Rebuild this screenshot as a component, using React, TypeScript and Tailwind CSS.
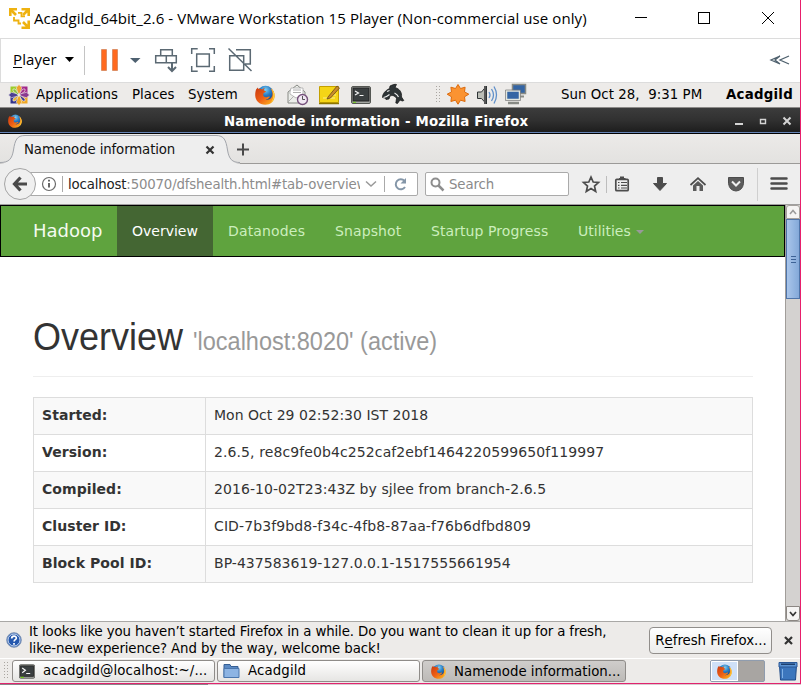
import type { ReactNode } from "react";

const GTK = "font-['DejaVu_Sans',sans-serif] text-[13.33px] leading-[16px] whitespace-pre";
const WIN = "font-['Open_Sans','Noto_Sans',sans-serif] whitespace-pre text-black";

function Firefox({ size, className = "" }: { size: number; className?: string }) {
  return (
    <svg width={size} height={size} viewBox="0 0 20 20" className={"shrink-0 " + className}>
      <defs>
        <radialGradient id="globe" cx=".5" cy=".25" r=".7">
          <stop offset="0" stopColor="#7fd0f5" />
          <stop offset=".45" stopColor="#2a7fc6" />
          <stop offset="1" stopColor="#123a80" />
        </radialGradient>
        <linearGradient id="fox" x1="0" y1="0" x2="1" y2="1">
          <stop offset="0" stopColor="#c93a10" />
          <stop offset=".5" stopColor="#ee5f16" />
          <stop offset=".85" stopColor="#f9a51c" />
          <stop offset="1" stopColor="#ffe14a" />
        </linearGradient>
      </defs>
      <circle cx="10.5" cy="9" r="8.3" fill="url(#globe)" />
      <path
        d="M1.2 4.2C1.7 3.6 2.2 3 2.9 2.4c.1.7.4 1.200.8 1.500 1.200-.3 2.500 0 3.500.500C8.500 3.300 9.600 3 9.900 3c-.7.7-1.200 1.700-1.200 2.300 1.200.7 2 .7 2.300 1-.2.9-1.800 1.500-2.600 2-.1.9.2 1.400-.3 2 .6 1.700 2.500 2.300 4 1.700 1-.4 2.100-.9 2.800-.1-1.200 1.400-2.900 2.800-4.700 2.900 4.500.6 7.300-2.400 7.200-5.900 0-2.400-.9-4.300-2-5.700 2.900 1.700 4.500 4.600 4.300 8C19.400 16.200 15.300 19.700 10.300 19.700 4.500 19.700.3 15.600.2 10.200.2 7.600.5 6 1.200 4.200z"
        fill="url(#fox)"
      />
      <path d="M15.800 3.200c2.700 1.900 4 4.700 3.700 8-.4 2.600-1.600 4.700-3.300 6 1.500-2.600 2.300-5 1.900-8.300-.3-2.300-1.200-4.100-2.300-5.700z" fill="#ffd23c" />
    </svg>
  );
}

function Terminal({ w, h }: { w: number; h: number }) {
  return (
    <svg width={w} height={h} viewBox="0 0 20 18" className="shrink-0">
      <rect x=".5" y=".5" width="19" height="17" rx="1.500" fill="#a4a6a2" stroke="#555753" />
      <rect x="2" y="2" width="16" height="13" fill="#3a3f40" stroke="#222" />
      <path d="M4 4.500L8 7.500 4 10.500M9 11.500h5" stroke="#f5f5f5" strokeWidth="1.500" fill="none" />
      <path d="M2 16.300h4" stroke="#73d216" strokeWidth="1.500" />
    </svg>
  );
}

function WindowsTitle() {
  return (
    <div className="flex h-[38px] items-center pb-[2px] pl-[9px]">
      <svg width="21" height="21" viewBox="0 0 21 21" className="shrink-0" fill="none" stroke="#eeb211" strokeWidth="2.600">
        <path d="M1.300 8V1.300H8" />
        <path d="M1.500 1.500l5.500 5.500" />
        <path d="M12.500 1.300h7.200V8M19.500 1.500L14 7" />
        <path d="M19.700 12.500v7.200H12.500M19.500 19.500L14 14" />
        <path d="M9 4.800h3.500v3.500H16M5 9v3.500h4.500v3H12" strokeWidth="1.800" />
      </svg>
      <span className={WIN + " ml-[4px] w-[560px] text-[15px] leading-[20px] tracking-[0.085px]"}>
        Acadgild_64bit_2.6 - VMware Workstation 15 Player (Non-commercial use only)
      </span>
      <svg width="146" height="14" viewBox="0 0 146 14" className="ml-[40px] shrink-0" fill="none" stroke="#000">
        <path d="M1 6.500h12" />
        <rect x="64.500" y="1.500" width="11" height="11" />
        <path d="M128 1l12 12M140 1l-12 12" />
      </svg>
    </div>
  );
}

function PlayerBar() {
  return (
    <div className="flex h-[45px] items-center border-y border-l border-[#dcdcdc] pb-[2px] pl-[12px]">
      <span className={WIN + " w-[48px] text-[15px] leading-[20px] tracking-[0.1px] -translate-y-px"}>
        <span className="underline decoration-1 underline-offset-2">P</span>layer
      </span>
      <svg width="230" height="34" viewBox="61 43 230 34" className="shrink-0" fill="none">
        <path d="M65 57h9l-4.500 5z" fill="#000" />
        <path d="M84.500 46v29" stroke="#c4c4c4" />
        <path d="M101.500 49.500h5v21h-5zM112.500 49.500h5v21h-5z" fill="#ff6a1f" stroke="#c8764c" strokeWidth=".6" />
        <path d="M130 58h10.500l-5.200 5z" fill="#4e6070" />
        <g stroke="#5b6973" strokeWidth="1.500">
          <path d="M160.700 49.700h11.600v6h-11.600zM155.700 55.700h10.600v7h-10.600zM166.300 55.700h10v7h-10z" />
          <path d="M172 63v7M168 67l4 4 4-4" strokeWidth="2" />
          <path d="M191.700 54v-5.300h6M209 48.700h5.300V54M214.300 66v5.300H209M197.700 71.300h-6V66" />
          <path d="M196.700 54h12.600v12.600h-12.600z" />
          <path d="M236 49.700h14.300V64H245M229.700 55.700h14v14.600h-14zM228.500 48.500l23 22.500" />
        </g>
      </svg>
      <svg width="21" height="12" viewBox="0 0 21 12" className="ml-auto mr-[10px] shrink-0" fill="none" stroke="#4f616e" strokeWidth="1.300">
        <path d="M11 2L2 6l9 4M20 2L11 6l9 4M11 2L6 6l5 4" />
      </svg>
    </div>
  );
}

function Dots({ rows }: { rows: number }) {
  return (
    <svg width="6" height={rows * 3} viewBox={`0 0 6 ${rows * 3}`} className="shrink-0">
      {Array.from({ length: rows }, (_, i) => (
        <path key={i} d={`M0 ${i * 3 + 0.5}h1M3 ${i * 3 + 0.5}h1`} stroke="#aaa6a1" />
      ))}
    </svg>
  );
}

function CentosLogo() {
  const blades = ["#efa030", "#a02a86", "#8a3a90", "#3a3a90", "#efa724", "#e5b030", "#4c3f93", "#8cbf3a"];
  return (
    <svg width="22" height="22" viewBox="-11 -11 22 22" className="shrink-0">
      <path d="M-8.500-8.500h7.500v7.500h-7.500z" fill="#9ccd2a" />
      <path d="M1-8.500h7.500V-1H1z" fill="#a3288a" />
      <path d="M1 1h7.500v7.500H1z" fill="#efa724" />
      <path d="M-8.500 1H-1v7.500h-7.500z" fill="#34338a" />
      {blades.map((c, i) => (
        <path
          key={i}
          d={i % 2 ? "M0-8.500L1.500-7 .6-1h-1.200L-1.500-7z" : "M0-10.500l2.700 3-1.700 6.500h-2l-1.700-6.500z"}
          fill={c}
          stroke="#f3f1ef"
          strokeWidth=".6"
          transform={`rotate(${i * 45})`}
        />
      ))}
    </svg>
  );
}

function GnomePanel() {
  return (
    <div className={GTK + " flex h-[24px] items-center bg-[#edebe9] pl-[8px] text-black"}>
      <CentosLogo />
      <span className="ml-[6px] w-[96px] tracking-[0.04px]">Applications</span>
      <span className="w-[56px]">Places</span>
      <span className="w-[67px]">System</span>
      <Firefox size={20} />
      <svg width="132" height="24" viewBox="275 83 132 24" className="shrink-0" fill="none">
        <path d="M288 92l9-7 8 7v11h-17z" fill="#eceeea" stroke="#888a85" />
        <path d="M290 92l1-4h12v7l-7 3-6-4z" fill="#fff" stroke="#aaa" strokeWidth=".8" />
        <path d="M288 102l6-6M293 90h8M293 92.500h8" stroke="#b0b0b0" />
        <circle cx="302.500" cy="99.500" r="5" fill="#f1e8f3" stroke="#75507b" strokeWidth="1.400" />
        <path d="M302.500 96v3.500h2.500" stroke="#555" />
        <path d="M319.500 86.500h19v16h-19z" fill="#f5d516" stroke="#c4a000" />
        <path d="M319 103.500h20" stroke="#8d7500" strokeWidth="1.500" />
        <path d="M323 98h12M330 95h6" stroke="#fcf08a" />
        <path d="M328 97l9-11 2.500 2-9 10-3.500 1z" fill="#c98c2a" stroke="#6b4a1a" strokeWidth=".8" />
        <rect x="351.500" y="86.500" width="19" height="17" rx="1.500" fill="#a4a6a2" stroke="#555753" />
        <rect x="353" y="88" width="16" height="13" fill="#3a3f40" stroke="#222" />
        <path d="M355 91l3.500 2-3.500 2M359.500 95.500h4" stroke="#f5f5f5" strokeWidth="1.200" />
        <path d="M353 102.300h3" stroke="#73d216" />
        <path
          d="M382.500 97.500c0-4 3-7 7-9l.5-2.500c3-1.500 5-2 6.500-1.500l-1.500 3c5 1.500 7 5 6.500 9.500l2.300 3.500-1.500.500-2.300-1-2.500 3.500-1.700-.5.700-4.500c-2-3-4-3.500-6.500-2.500l-1 3-3 .500-1-1.500z"
          fill="#2e3436"
          stroke="#111"
          strokeWidth=".7"
        />
        <path d="M383.500 97.500c2.500-.3 4-1.300 6-3M387 91.500l2.500-1M394.500 93c2 1 3.300 2 4 4" stroke="#eee" strokeWidth="1.100" />
      </svg>
      <span className="ml-[29px] flex">
        <Dots rows={6} />
      </span>
      <svg width="88" height="24" viewBox="442 83 88 24" className="shrink-0" fill="none">
        <path d="M458 84.500l2.500 4 4.600-1.300-.6 4.700 4.300 2.300-4.300 2.600.6 4.700-4.600-1.300-2.500 4-2.500-4-4.600 1.300.6-4.700-4.300-2.600 4.300-2.300-.6-4.700 4.600 1.300z" fill="#fb9331" stroke="#dc6a0c" strokeWidth="1" strokeLinejoin="round" />
        <path d="M477.500 92h4l5-6v18l-5-5.500h-4z" fill="#babdb6" stroke="#2e3436" />
        <path d="M485 86v18" stroke="#555" strokeWidth="2" />
        <path d="M489 92q2 3 0 6M491.500 89q4 6 0 12M494 86.500q5 8.500 0 17" stroke="#5f8fc9" strokeWidth="1.300" />
        <path d="M512.500 84.500h13v9h-13z" fill="#3465a4" stroke="#888a85" strokeWidth="1.500" />
        <path d="M516 96.500h8" stroke="#888a85" strokeWidth="2" />
        <path d="M506.500 91h13v8.500h-13z" fill="#3465a4" stroke="#e3e7df" strokeWidth="1.500" />
        <path d="M505.500 90h15v10.500h-15z" stroke="#777" strokeWidth=".7" />
        <path d="M508 103h11" stroke="#888a85" strokeWidth="2.500" />
      </svg>
      <span className="ml-[31px] w-[165px] tracking-[0.05px]">Sun Oct 28,  9:31 PM</span>
      <span className="font-bold tracking-[0.25px]">Acadgild</span>
    </div>
  );
}

function FirefoxTitle() {
  return (
    <div className="flex h-[27px] items-center border-b border-t border-b-black border-t-[#8c8a88] bg-linear-to-b from-[#3c3c3c] via-[#303030] to-[#1c1c1c] pl-[8px] shadow-[inset_0_-1px_0_#6583b5]">
      <Firefox size={14} />
      <span className={GTK + " ml-[202px] w-[510px] translate-y-px font-bold tracking-[0.16px] text-white"}>
        Namenode information - Mozilla Firefox
      </span>
      <svg width="58" height="12" viewBox="734 115 58 12" className="shrink-0" fill="none" stroke="#d4d4d4" strokeWidth="2">
        <path d="M735 124h8" />
        <path d="M760.500 119.500h5v4h-5z" strokeWidth="1.400" />
        <path d="M783.500 117.500l7 7M790.500 117.500l-7 7" />
      </svg>
    </div>
  );
}

function TabStrip() {
  return (
    <div className="relative flex h-[30px] items-center border-b border-[#9b9a98] bg-linear-to-b from-[#eceae8] to-[#e3e2e0]">
      <svg width="250" height="30" viewBox="0 0 250 30" className="absolute left-0 top-0" fill="none">
        <path d="M0 29.500C9 29.500 12 25 13.500 16 15 6 17 1.500 25 1.500h191c8 0 10 4.500 11.500 14.500C229 25 232 29.500 240 29.500V30H0z" fill="#eeeeee" />
        <path d="M0 28.500C9 28.500 12 25 13.500 16 15 6 17 1.500 25 1.500h191c8 0 10 4.500 11.500 14.500C229 25 232 28.500 240 28.500" stroke="#a2a5ab" />
        <path d="M206.500 12.500l7 7M213.500 12.500l-7 7" stroke="#333" strokeWidth="2.200" />
        <path d="M237 15.500h12M243 9.500v12" stroke="#4a4a4a" strokeWidth="2" />
      </svg>
      <span className={GTK + " relative ml-[24px] translate-y-px tracking-[-0.13px] text-[#111]"}>Namenode information</span>
    </div>
  );
}

function NavToolbar() {
  return (
    <div className={GTK + " flex h-[41px] items-center border-b border-[#a09f9e] bg-[#eeeeee]"}>
      <div className="relative z-10 ml-[4px] flex size-[32px] shrink-0 items-center justify-center rounded-full border border-[#a5a5a5] bg-[#f0f0f0]">
        <svg width="16" height="16" viewBox="0 0 16 16" fill="none" stroke="#4a4a4a" strokeWidth="3.200">
          <path d="M8.500 1.500L2.500 8l6 6.500M3 8h12" />
        </svg>
      </div>
      <div className="-ml-[6px] flex h-[24px] w-[388px] shrink-0 items-center rounded-r-[2px] border border-[#aaa] bg-white">
        <svg width="25" height="18" viewBox="40 175 25 18" className="ml-[9px] shrink-0" fill="none" stroke="#6a6a6a">
          <circle cx="49" cy="184" r="6.500" strokeWidth="1.200" />
          <path d="M49 183v4.500M49 179.800v1.800" strokeWidth="1.800" stroke="#555" />
          <path d="M62.500 176v16" stroke="#aaa" />
        </svg>
        <span className="ml-[3px] w-[292px] shrink-0 translate-y-px overflow-hidden tracking-[-0.17px] text-[#8c8c8c]">
          <span className="text-[#222]">localhost</span>:50070/dfshealth.html#tab-overview
        </span>
        <svg width="54" height="18" viewBox="360 175 54 18" className="shrink-0" fill="none">
          <path d="M366 181.500l5 4.500 5-4.500" stroke="#999" strokeWidth="1.500" />
          <path d="M384.500 176v16" stroke="#aaa" />
          <path d="M405 187a5 5 0 1 1-.5-6" stroke="#8496a8" strokeWidth="2" />
          <path d="M406 178v5.500h-5.500z" fill="#8496a8" />
        </svg>
      </div>
      <div className="ml-[7px] flex h-[24px] w-[144px] shrink-0 items-center rounded-[2px] border border-[#aaa] bg-white text-[#8a8a8a]">
        <svg width="15" height="15" viewBox="0 0 15 15" className="ml-[4px]" fill="none" stroke="#8e8e8e" strokeWidth="2">
          <circle cx="5.500" cy="5.500" r="4" />
          <path d="M8.500 8.500l5 5" strokeWidth="2.500" />
        </svg>
        <span className="ml-[4px] translate-y-px tracking-[-0.1px]">Search</span>
      </div>
      <svg width="231" height="38" viewBox="569 165 231 38" className="shrink-0" fill="none" stroke="#4c4c4c">
        <path d="M591 177l2.200 5 5.300.5-4 3.600 1.200 5.400-4.700-2.900-4.700 2.900 1.200-5.400-4-3.600 5.300-.5z" strokeWidth="1.700" />
        <path d="M606.500 176v17" stroke="#bdbdbd" />
        <path d="M619 179h6.500M620 177.500h4" strokeWidth="2" />
        <rect x="615.800" y="179.300" width="12.400" height="11.400" rx="1" strokeWidth="1.700" />
        <path d="M618 182.500h1.500M621 182.500h6M618 185.300h1.500M621 185.300h6M618 188h1.500M621 188h6" strokeWidth="1.200" />
        <path d="M657.500 177.500h5v6h4L660 190.500l-6.500-7h4z" fill="#4c4c4c" />
        <path d="M690.500 185l7.500-6.800 7.500 6.800" strokeWidth="1.700" />
        <path d="M693 185.500l5-4.500 5 4.500v5.500h-3.500v-5h-3v5H693z" fill="#5c5c5c" stroke="none" />
        <path d="M728.500 177.500h15v6q-1 7-7.500 7.500-6.500-.5-7.500-7.500z" fill="#5c5c5c" />
        <path d="M732 181.500l4 4 4-4" stroke="#eee" strokeWidth="2" />
        <path d="M757.500 168v33" stroke="#cfcfcf" />
        <path d="M771.500 178.500h15M771.500 183.500h15M771.500 188.500h15" strokeWidth="2.500" strokeLinecap="round" />
      </svg>
    </div>
  );
}

function NavLink({ children, className }: { children: ReactNode; className: string }) {
  return <a className={"flex h-full items-center pl-[15px] " + className}>{children}</a>;
}

const rows = [
  ["Started:", "Mon Oct 29 02:52:30 IST 2018", "tracking-[0.01px]"],
  ["Version:", "2.6.5, re8c9fe0b4c252caf2ebf1464220599650f119997", "tracking-[0.1px]"],
  ["Compiled:", "2016-10-02T23:43Z by sjlee from branch-2.6.5", "tracking-[0.07px]"],
  ["Cluster ID:", "CID-7b3f9bd8-f34c-4fb8-87aa-f76b6dfbd809", "tracking-[0.1px]"],
  ["Block Pool ID:", "BP-437583619-127.0.0.1-1517555661954", "tracking-[0.03px]"],
];

function Page() {
  return (
    <div className="w-[785px] bg-white font-['DejaVu_Sans',sans-serif] text-[14px] leading-[20px] text-[#333]">
      <nav className="flex h-[52px] items-center border border-black bg-[#5fa33e] text-[#cceebd]">
        <span className="ml-[32px] w-[84px] text-[18px] text-[#f4fbf0]">Hadoop</span>
        <NavLink className="w-[96px] bg-[#446633] text-white">Overview</NavLink>
        <NavLink className="w-[107px] tracking-[0.16px]">Datanodes</NavLink>
        <NavLink className="w-[96px] tracking-[0.1px]">Snapshot</NavLink>
        <NavLink className="w-[147px] tracking-[0.07px]">Startup Progress</NavLink>
        <NavLink className="">
          Utilities
          <span className="ml-[5px] mt-px border-x-4 border-t-4 border-x-transparent border-t-[#999]" />
        </NavLink>
      </nav>
      <div className="ml-[33px] w-[720px] pt-[61px]">
        <h1 className="h-[59px] border-b border-[#eee] font-['Liberation_Sans',sans-serif] text-[36px] leading-[40px]">
          <span className="inline-block origin-[0_32px] scale-y-[1.06]">
            Overview <small className="text-[23.5px] text-[#999]">'localhost:8020' (active)</small>
          </span>
        </h1>
        <table className="mt-[20px] w-full border-collapse">
          <tbody>
            {rows.map(([k, v, t]) => (
              <tr key={k} className="h-[37px] odd:bg-[#f9f9f9]">
                <th className="w-[172px] border border-[#ddd] px-2 pt-0 pb-[2px] text-left font-bold tracking-[0.07px]">{k}</th>
                <td className={"border border-[#ddd] px-2 pt-0 pb-[2px] " + t}>{v}</td>
              </tr>
            ))}
          </tbody>
        </table>
      </div>
    </div>
  );
}

function Scrollbar() {
  return (
    <div className="flex w-[15px] flex-col border-l border-[#a19d99] bg-[#d4d2d0]">
      <div className="flex h-[14px] items-center justify-center rounded-t-[3px] border border-[#a5a19d] bg-[#f5f4f3]">
        <svg width="8" height="6" fill="none" stroke="#9a9a9a" strokeWidth="1.500"><path d="M1 5l3-3.500L7 5" /></svg>
      </div>
      <div className="flex h-[80px] flex-col items-center justify-center gap-[2px] border border-[#4f74a8] bg-linear-to-r from-[#a9c5ea] to-[#84a9d9]">
        <i className="h-px w-[5px] bg-[#3d6296]" />
        <i className="h-px w-[5px] bg-[#3d6296]" />
        <i className="h-px w-[5px] bg-[#3d6296]" />
      </div>
      <div className="mt-auto flex h-[15px] items-center justify-center rounded-b-[3px] border border-[#8c8783] bg-[#f5f4f3]">
        <svg width="8" height="6" fill="none" stroke="#333" strokeWidth="1.700"><path d="M1 1l3 3.500L7 1" /></svg>
      </div>
    </div>
  );
}

function Notification() {
  return (
    <div className={GTK + " flex h-[37px] items-center border-t border-[#a9a8a6] bg-[#edebe9] pl-[6px] text-black"}>
      <svg width="16" height="16" viewBox="0 0 16 16" className="shrink-0">
        <circle cx="8" cy="8" r="7.300" fill="#2f64b8" stroke="#8396b4" />
        <circle cx="8" cy="8" r="6" fill="#2558ae" stroke="#dde7f5" strokeWidth=".9" />
        <path d="M5.700 6.500c0-3 4.800-3 4.600-.3-.1 1.500-2.200 1.500-2.200 3.300M8 11v1.700" fill="none" stroke="#fff" strokeWidth="1.700" />
      </svg>
      <p className="ml-[7px] w-[620px] leading-[17px] tracking-[-0.12px]">
        It looks like you haven’t started Firefox in a while. Do you want to clean it up for a fresh,{"\n"}
        like-new experience? And by the way, welcome back!
      </p>
      <button className="flex h-[27px] w-[123px] shrink-0 items-center justify-center rounded-[4px] border border-[#918e8b] bg-linear-to-b from-white to-[#ececeb] pl-px pt-px tracking-[-0.04px]">
        R<span className="underline underline-offset-2">e</span>fresh Firefox...
      </button>
      <svg width="9" height="9" viewBox="0 0 9 9" className="ml-[12px]" fill="none" stroke="#333" strokeWidth="2.200">
        <path d="M1 1l7 7M8 1L1 8" />
      </svg>
    </div>
  );
}

function Task({ className, children }: { className: string; children: ReactNode }) {
  return (
    <div className={"flex h-[22px] shrink-0 items-center rounded-[3px] border border-[#8f8c89] " + className}>{children}</div>
  );
}

function Taskbar() {
  return (
    <div className={GTK + " flex h-[25px] items-center border-t border-white bg-[#edebe9] pl-[4px] text-black"}>
      <Dots rows={6} />
      <Task className="ml-[2px] w-[203px] gap-[8px] bg-linear-to-b from-white to-[#e6e5e3] pl-[6px] tracking-[0.08px]">
        <Terminal w={16} h={15} />
        acadgild@localhost:~/...
      </Task>
      <Task className="ml-[2px] w-[203px] gap-[8px] bg-linear-to-b from-white to-[#e6e5e3] pl-[5px] tracking-[0.12px]">
        <svg width="17" height="16" viewBox="0 0 17 16" className="shrink-0">
          <path d="M1 14.500V1.500h6l1 2h7v11z" fill="#5b8ac4" stroke="#365f94" />
          <path d="M1 14.500V5.500h15v9z" fill="#8db4e3" stroke="#4a76ad" />
        </svg>
        Acadgild
      </Task>
      <Task className="ml-[2px] w-[204px] gap-[8px] bg-linear-to-b from-[#cfcdcb] to-[#bdbab7] pl-[8px]">
        <Firefox size={15} />
        <span className="translate-y-px">Namenode information...</span>
      </Task>
      <div className="ml-[84px] flex h-[22px] w-[55px] shrink-0 overflow-hidden rounded-[2px] border border-[#8f9cae] bg-[#a8a5a2]">
        <div className="flex w-[27px] items-center justify-center border border-white bg-[#cfe0f7]">
          <Firefox size={15} />
        </div>
      </div>
      <svg width="20" height="20" viewBox="0 0 20 20" className="ml-[13px] shrink-0">
        <path d="M1.500 4h17l-1 15H2.500z" fill="#3c76bd" stroke="#1f4a87" />
        <path d="M1 1.500h18V6H1z" fill="#5b93d3" stroke="#2a5796" />
        <path d="M3 2.500h14v1.500H3z" fill="#1e3f6e" />
        <path d="M4.500 8v9" stroke="#7fb0e6" />
      </svg>
    </div>
  );
}

export default function App() {
  return (
    <div className="flex h-[685px] w-[801px] flex-col overflow-hidden bg-white">
      <div className="flex h-[683px] w-[801px] flex-col border-r border-[#e81e6b]">
        <WindowsTitle />
        <PlayerBar />
        <GnomePanel />
        <FirefoxTitle />
        <TabStrip />
        <NavToolbar />
        <div className="flex h-[416px]">
          <Page />
          <Scrollbar />
        </div>
        <Notification />
        <Taskbar />
      </div>
      <div className="h-px w-[801px] bg-[#e0246e]" />
      <div className="flex h-px bg-[#d9c9cf]">
        <div className="w-[208px] bg-[#8c8489]" />
      </div>
    </div>
  );
}
